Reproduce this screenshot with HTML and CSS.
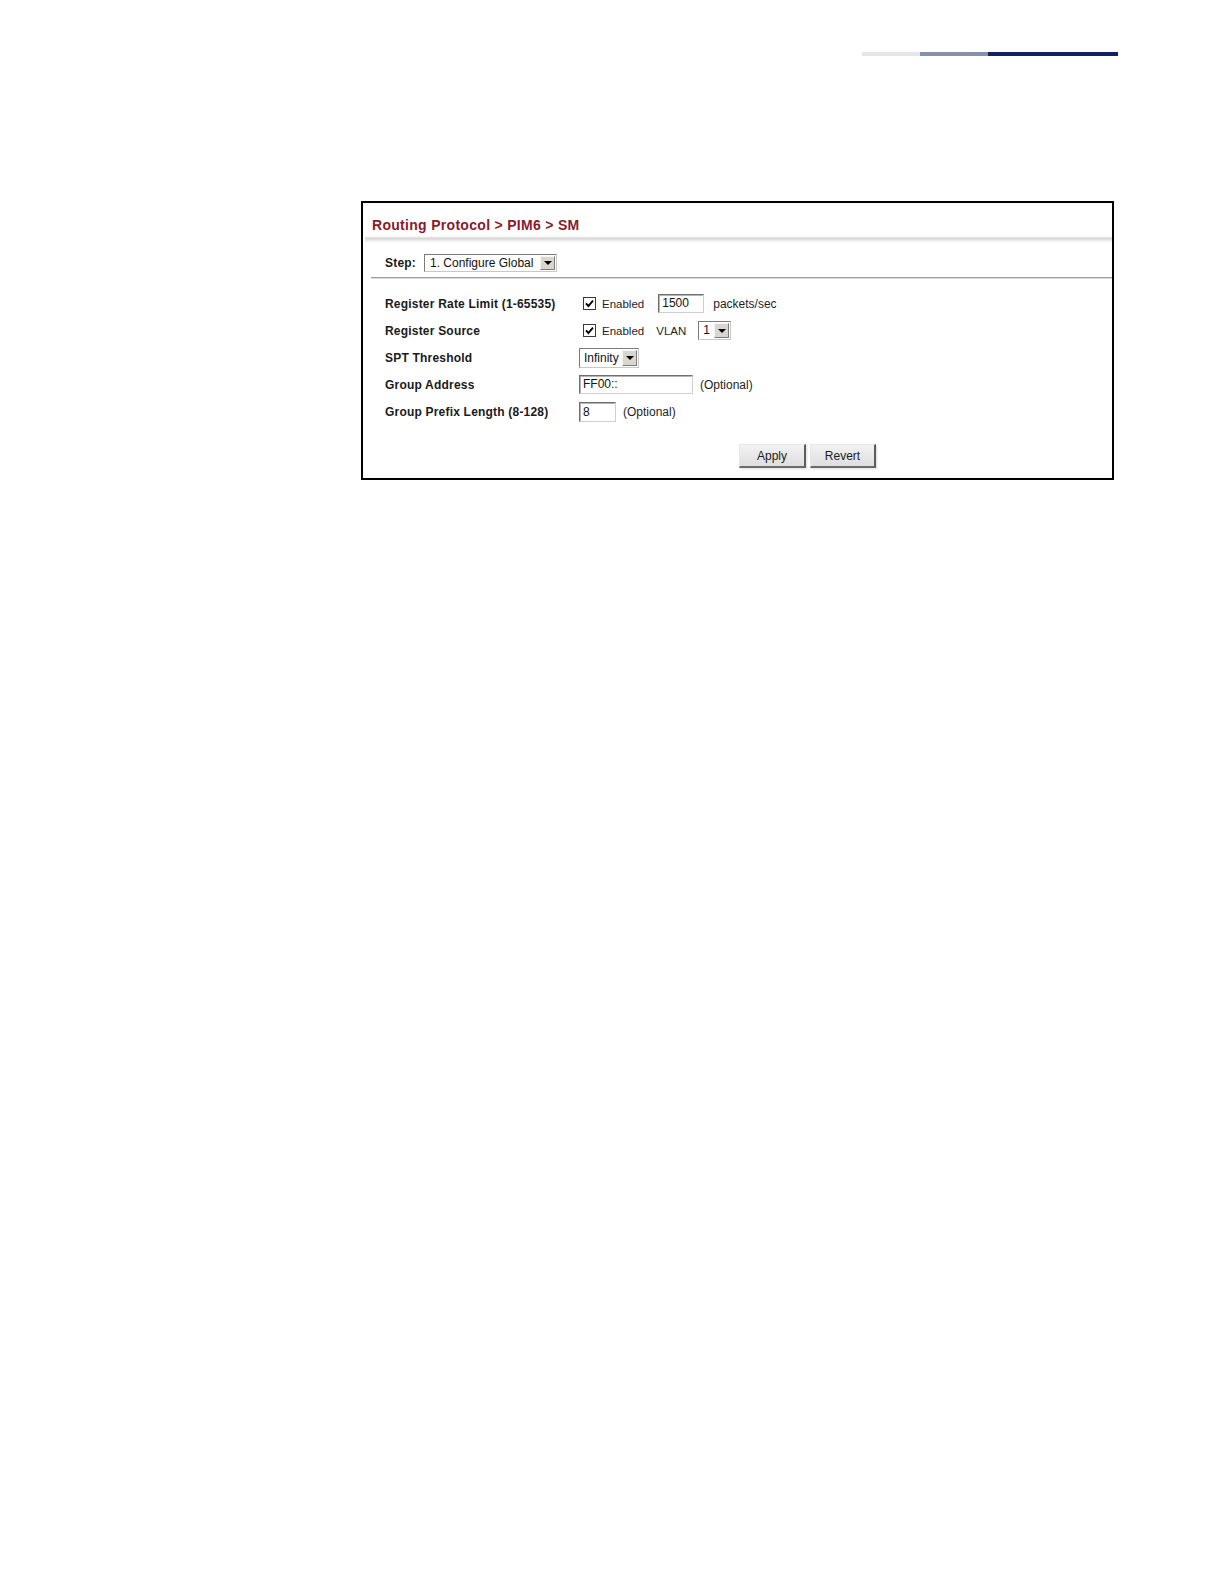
FILE: index.html
```html
<!DOCTYPE html>
<html lang="en">
<head>
<meta charset="utf-8">
<title>Routing Protocol &gt; PIM6 &gt; SM</title>
<link rel="stylesheet" href="styles.css">
</head>
<body>
<div class="topbar">
  <span class="seg seg-light"></span>
  <span class="seg seg-mid"></span>
  <span class="seg seg-dark"></span>
</div>

<div class="frame">
  <div class="title">Routing Protocol &gt; PIM6 &gt; SM</div>
  <div class="shade"></div>

  <div class="step">
    <span class="step-label">Step:</span>
    <div class="select step-select">
      <span class="select-val">1. Configure Global</span>
      <span class="select-btn"><span class="tri"></span></span>
    </div>
  </div>
  <div class="rule"></div>

  <div class="form">
    <div class="label">Register Rate Limit (1-65535)</div>
    <div class="ctrl">
      <span class="check"><svg width="13" height="13" viewBox="0 0 13 13"><rect x="0.5" y="0.5" width="12" height="12" fill="#fff" stroke="#3a3a3a"/><path d="M3 6.4 L5.4 9 L10 3.6" fill="none" stroke="#000" stroke-width="1.9"/></svg></span>
      <span class="txt txt-en">Enabled</span>
      <span class="input in-rate">1500</span>
      <span class="txt txt-pk">packets/sec</span>
    </div>

    <div class="label">Register Source</div>
    <div class="ctrl">
      <span class="check"><svg width="13" height="13" viewBox="0 0 13 13"><rect x="0.5" y="0.5" width="12" height="12" fill="#fff" stroke="#3a3a3a"/><path d="M3 6.4 L5.4 9 L10 3.6" fill="none" stroke="#000" stroke-width="1.9"/></svg></span>
      <span class="txt txt-en">Enabled</span>
      <span class="txt txt-vlan">VLAN</span>
      <div class="select vlan-select">
        <span class="select-val">1</span>
        <span class="select-btn"><span class="tri"></span></span>
      </div>
    </div>

    <div class="label">SPT Threshold</div>
    <div class="ctrl">
      <div class="select spt-select">
        <span class="select-val">Infinity</span>
        <span class="select-btn"><span class="tri"></span></span>
      </div>
    </div>

    <div class="label">Group Address</div>
    <div class="ctrl">
      <span class="input in-addr">FF00::</span>
      <span class="txt txt-opt">(Optional)</span>
    </div>

    <div class="label">Group Prefix Length (8-128)</div>
    <div class="ctrl">
      <span class="input in-len">8</span>
      <span class="txt txt-opt">(Optional)</span>
    </div>
  </div>

  <div class="actions">
    <button class="btn">Apply</button>
    <button class="btn">Revert</button>
  </div>
</div>
</body>
</html>
```

FILE: styles.css
```css
* { box-sizing: border-box; }

body {
  margin: 0;
  background: #fff;
  font-family: "Liberation Sans", Arial, sans-serif;
  color: #1a1a1a;
}

/* decorative bar top right */
.topbar {
  display: flex;
  justify-content: flex-end;
  padding-top: 52px;
  padding-right: 106px;
  height: 56px;
}
.seg { display: block; height: 4px; }
.seg-light { width: 58px; background: #e6e7e9; }
.seg-mid { width: 68px; background: #8790b0; }
.seg-dark { width: 130px; background: #0c2461; }

/* screenshot frame */
.frame {
  margin-top: 145px;
  margin-left: 361px;
  width: 753px;
  height: 279px;
  border: 2px solid #000;
  background: #fff;
}

.title {
  padding: 14px 0 0 9px;
  height: 33px;
  font-size: 14px;
  line-height: 16px;
  font-weight: bold;
  letter-spacing: 0.3px;
  color: #8a1b2b;
}

.shade {
  height: 7px;
  margin-left: 2px;
  background: linear-gradient(to bottom, #ffffff 0%, #d6d6d6 35%, #ececec 65%, #ffffff 100%);
}

.step {
  display: flex;
  align-items: center;
  margin-top: 10px;
  padding-left: 22px;
  height: 19px;
}
.step-label {
  font-size: 12px;
  font-weight: bold;
  width: 39px;
  letter-spacing: 0.2px;
}

.rule {
  margin: 5px 0 0 8px;
  height: 2px;
  border-top: 1px solid #9c9c9c;
  border-bottom: 1px solid #dedede;
}

/* select look-alike */
.select {
  display: flex;
  align-items: stretch;
  height: 19px;
  border: 1px solid #7b7b7b;
  border-right-color: #c8c8c8;
  border-bottom-color: #c8c8c8;
  background: #fff;
  padding: 1px;
}
.select-val {
  flex: 1;
  font-size: 12px;
  line-height: 15px;
  padding-left: 4px;
  color: #111;
  white-space: nowrap;
}
.select-btn {
  width: 15px;
  display: flex;
  align-items: center;
  justify-content: center;
  background: #d9d6d0;
  border: 1px solid #f4f4f4;
  border-right-color: #7a7a7a;
  border-bottom-color: #7a7a7a;
}
.tri {
  width: 0;
  height: 0;
  border-left: 4px solid transparent;
  border-right: 4px solid transparent;
  border-top: 4px solid #000;
}
.step-select { width: 133px; height: 18px; }
.vlan-select { width: 33px; }
.vlan-select .select-val { padding-left: 3px; }
.spt-select { width: 60px; height: 20px; }
.spt-select .select-val { padding-left: 3px; line-height: 16px; }

/* form grid */
.form {
  display: grid;
  grid-template-columns: 194px auto;
  grid-auto-rows: 27px;
  margin-top: 11px;
  padding-left: 22px;
}
.label {
  display: flex;
  align-items: center;
  font-size: 12px;
  font-weight: bold;
  letter-spacing: 0.2px;
  color: #1a1a1a;
}
.ctrl {
  display: flex;
  align-items: center;
}

.check {
  display: flex;
  margin-left: 4px;
  width: 13px;
  height: 13px;
}
.txt {
  font-size: 12px;
  color: #1e1e1e;
  white-space: nowrap;
}
.txt-en { margin-left: 6px; font-size: 11.5px; }
.in-rate { margin-left: 14px; }
.txt-pk { margin-left: 9px; }
.txt-vlan { margin-left: 12px; font-size: 11.5px; }
.vlan-select { margin-left: 12px; }
.txt-opt { margin-left: 7px; }

.input {
  display: block;
  height: 19px;
  border: 1px solid #6f6f6f;
  border-right-color: #cfcfcf;
  border-bottom-color: #cfcfcf;
  box-shadow: inset 1px 1px 0 #b4b4b4;
  font-size: 12px;
  line-height: 17px;
  padding-left: 3px;
  color: #111;
  background: #fff;
}
.in-rate { width: 46px; }
.in-addr { width: 114px; }
.in-len { width: 37px; height: 20px; line-height: 18px; }

/* buttons */
.actions {
  display: flex;
  gap: 4px;
  margin-top: 19px;
  padding-left: 376px;
}
.btn {
  width: 67px;
  height: 24px;
  padding: 0;
  font-family: "Liberation Sans", Arial, sans-serif;
  font-size: 12px;
  color: #1c1c1c;
  background: linear-gradient(to bottom, #f2f2f2 0%, #dedede 100%);
  border: 1px solid #e8e8e8;
  border-right: 2px solid #5c5c5c;
  border-bottom: 2px solid #6a6a6a;
  box-shadow: 1px 1px 2px rgba(0,0,0,0.15);
}
.btn + .btn { width: 66px; }
```
